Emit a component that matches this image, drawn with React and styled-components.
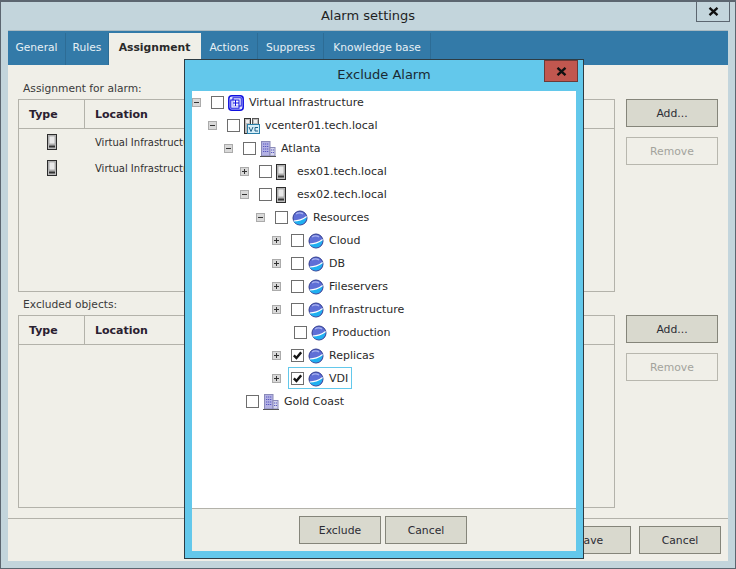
import React from 'react';
import styled, { createGlobalStyle } from 'styled-components';

const Global = createGlobalStyle`
  html, body { margin: 0; padding: 0; background: #c3d5dc; }
  * { box-sizing: border-box; }
`;
const FONT = `"DejaVu Sans", "Noto Sans", sans-serif`;

const Page = styled.div`
  position: relative; width: 736px; height: 569px; display: flex; flex-direction: column;
  background: #c3d5dc; border: 1px solid #5c6670; border-top-width: 2px;
  font-family: ${FONT}; font-size: 11px; color: #2a2a2a; overflow: hidden;
`;
const TitleBar = styled.div`
  height: 28px; display: flex; align-items: center; justify-content: center; position: relative;
  font-size: 13px; color: #1f1f1f; flex: none; padding-bottom: 2px;
`;
const CloseBtn = styled.div`
  position: absolute; top: ${p => p.$top}px; right: ${p => p.$right}px; width: 34px; height: 22px;
  display: flex; align-items: center; justify-content: center;
  background: ${p => p.$bg}; border: 1px solid ${p => p.$line};
`;
const Client = styled.div`
  margin: 0 7px 7px; flex: 1; display: flex; flex-direction: column; background: #f0efe8; min-height: 0;
  border-top: 1px solid #a8bac2;
`;
const Tabs = styled.div`
  height: 34px; display: flex; flex: none; padding-top: 2px; background: #337aa8;
`;
const Tab = styled.div`
  width: ${p => p.$w}px; display: flex; align-items: center; justify-content: center; padding-bottom: 3px;
  font-size: ${p => p.$on ? 10.8 : 10.7}px; color: ${p => p.$on ? '#2a2a2a' : '#e6f0f5'}; font-weight: ${p => p.$on ? 700 : 400};
  background: ${p => p.$on ? '#f0efe8' : 'transparent'};
  border-right: 1px solid ${p => p.$on ? 'transparent' : '#2d6c95'};
`;
const Body = styled.div`
  flex: 1; display: flex; flex-direction: column; padding: 0 10px; min-height: 0;
`;
const Section = styled.div`display: flex; flex-direction: column;`;
const Label = styled.div`
  height: ${p => p.$h}px; display: flex; align-items: flex-end; padding-left: 5px; padding-bottom: 4px; font-size: 10.7px; color: #3a3a3a;
`;
const Split = styled.div`display: flex; gap: 11px;`;
const List = styled.div`
  width: 597px; height: 193px; border: 1px solid #b3b2aa; flex: none;
`;
const ListHead = styled.div`
  height: 29px; display: flex; border-bottom: 1px solid #b3b2aa; font-weight: 700; font-size: 11px; color: #2a2030;
`;
const HeadCell = styled.div`
  width: ${p => p.$w}px; display: flex; align-items: center; padding-left: 10px;
  border-right: ${p => p.$w === 66 ? '1px solid #b3b2aa' : 'none'};
`;
const ListRow = styled.div`
  height: 26px; display: flex; align-items: center; font-size: 10px; color: #303030;
`;
const TypeCell = styled.div`width: 66px; display: flex; justify-content: center;`;
const LocCell = styled.div`padding-left: 10px;`;
const Side = styled.div`display: flex; flex-direction: column; gap: 10px;`;
const Button = styled.div`
  width: ${p => p.$w || 92}px; height: 28px; display: flex; align-items: center; justify-content: center;
  font-size: 10.8px; background: ${p => p.$off ? 'transparent' : '#d9d9ce'};
  color: ${p => p.$off ? '#a3a39c' : '#2c2c34'};
  border: 1px solid ${p => p.$off ? '#b8b7ae' : '#85857a'};
`;
const Footer = styled.div`
  height: 43px; flex: none; border-top: 1px solid #b3b2aa; display: flex; justify-content: flex-end;
  align-items: flex-start; gap: ${p => p.$gap}px; padding: 7px ${p => p.$pr}px 0 0; background: #f0efe8;
`;
const Dialog = styled.div`
  position: absolute; left: 183px; top: 57px; width: 400px; height: 500px; display: flex; flex-direction: column;
  background: #63c8eb; border: 1px solid #2d3c44; padding: 0 7px 7px;
`;
const DlgTitle = styled.div`
  height: 31px; flex: none; display: flex; align-items: center; justify-content: center; font-size: 13px; color: #1a2a33;
  padding-bottom: 2px;
`;
const Tree = styled.div`
  flex: 1; background: #fff; min-height: 0; display: flex; flex-direction: column;
`;
const Row = styled.div`
  height: 23px; flex: none; display: flex; align-items: center; padding-left: ${p => p.$x}px; position: relative;
  font-size: 11px; color: #2a2a2a;
`;
const Exp = styled.div`
  width: 9px; height: 9px; flex: none; margin-right: 10px; background: #d9d9d9; border: 1px solid #ababab;
  display: flex; align-items: center; justify-content: center; position: relative;
  &::before { content: ''; width: 5px; height: 1px; background: #333; position: absolute; }
  &::after { content: ''; display: ${p => p.$plus ? 'block' : 'none'}; width: 1px; height: 5px; background: #333; position: absolute; }
`;
const Check = styled.div`
  width: 13px; height: 13px; flex: none; border: 1px solid #6e6e6e; background: #fff;
  display: flex; align-items: center; justify-content: center;
`;
const IconSlot = styled.div`
  width: 16px; height: 16px; flex: none; margin-left: ${p => p.$ml ?? 4}px; margin-right: ${p => p.$mr ?? 5}px;
  display: flex; align-items: center; justify-content: center;
`;
const Focus = styled.div`
  position: absolute; left: 96px; top: 0; width: 64px; height: 22px; border: 1px solid #63c8eb;
`;
const DlgFooter = styled(Footer)`justify-content: center; background: #f0efe8;`;

const Tick = () => (
  <svg width="9" height="9" viewBox="0 0 11 11"><path d="M1 5.3 L4.2 8.6 L10 1.6" fill="none" stroke="#141414" strokeWidth="3" /></svg>
);
const HostIcon = () => (
  <svg width="10" height="16" viewBox="0 0 10 16">
    <rect x=".5" y=".5" width="9" height="15" fill="#bdbdbd" stroke="#2c2c2c" />
    <rect x="2" y="2" width="6" height="8" fill="#e8e8e8" stroke="#8a8a8a" strokeWidth=".6" />
    <rect x="2" y="11.5" width="6" height="2" fill="#333" />
  </svg>
);
const PoolIcon = () => (
  <svg width="16" height="16" viewBox="0 0 16 16">
    <circle cx="8" cy="8" r="7" fill="#5f6fd6" stroke="#2f3a8c" />
    <path d="M1.6 11 C6 11 10 10 14.6 6.5 C14.8 11 11.5 14.5 8 14.5 C5 14.5 2.8 13 1.6 11 Z" fill="#1fb0f0" />
    <path d="M1.6 11 C6 11 10 10 14.6 6.5" fill="none" stroke="#fff" strokeWidth="1.1" />
    <path d="M4 4 C6 2.6 9 2.6 11 4" fill="none" stroke="#a9b2ee" strokeWidth="1.2" />
  </svg>
);
const InfraIcon = () => (
  <svg width="16" height="16" viewBox="0 0 16 16">
    <rect x=".8" y=".8" width="14.4" height="14.4" rx="3" fill="#dfe3ff" stroke="#1010e0" strokeWidth="1.5" />
    <rect x="5" y="2.8" width="8.2" height="8.2" fill="#fff" stroke="#1010e0" />
    <rect x="2.8" y="5" width="8.2" height="8.2" fill="#fff" fillOpacity=".6" stroke="#1010e0" />
    <path d="M7.5 5 V11 M5 8 H11" stroke="#1010e0" />
  </svg>
);
const VcIcon = () => (
  <svg width="16" height="16" viewBox="0 0 16 16">
    <rect x=".5" y=".5" width="6" height="15" fill="#bbb" stroke="#333" />
    <rect x="8.5" y=".5" width="6" height="8" fill="#bbb" stroke="#555" />
    <rect x="2" y="2" width="3" height="3" fill="#eee" />
    <rect x="10" y="2" width="3" height="3" fill="#eee" />
    <rect x="3.5" y="6.5" width="12" height="9" fill="#d7eef8" stroke="#2a7fa8" />
    <path d="M5 9 L7 13.5 L9 9" fill="none" stroke="#1f5f85" />
    <path d="M14 9.5 H11 V13 H14" fill="none" stroke="#1f5f85" />
  </svg>
);
const CityIcon = () => (
  <svg width="16" height="16" viewBox="0 0 16 16">
    <rect x="1.5" y=".5" width="8.5" height="14.5" fill="#b4b2e4" stroke="#8a8ab8" />
    <rect x="10" y="6.5" width="5" height="8.5" fill="#d6d6ee" stroke="#8a8ab8" />
    <path d="M3 3 H8.5 M3 5.5 H8.5 M3 8 H8.5 M3 10.5 H8.5 M11 9 H14 M11 11.5 H14" stroke="#5a5ac0" strokeDasharray="1.3 .7" />
    <path d="M0 15.5 H16" stroke="#555" />
  </svg>
);
const XMark = () => (
  <svg width="11" height="9" viewBox="0 0 11 9"><path d="M1.5 .8 L9.5 8.2 M9.5 .8 L1.5 8.2" stroke="#111" strokeWidth="2.3" /></svg>
);

const icons = { host: HostIcon, pool: PoolIcon, infra: InfraIcon, vc: VcIcon, city: CityIcon };
const rows = [
  { x: 0, e: 'm', i: 'infra', t: 'Virtual Infrastructure' },
  { x: 16, e: 'm', i: 'vc', t: 'vcenter01.tech.local' },
  { x: 32, e: 'm', i: 'city', t: 'Atlanta' },
  { x: 48, e: 'p', i: 'host', t: 'esx01.tech.local', mr: 8, ml: 1 },
  { x: 48, e: 'm', i: 'host', t: 'esx02.tech.local', mr: 8, ml: 1 },
  { x: 64, e: 'm', i: 'pool', t: 'Resources' },
  { x: 80, e: 'p', i: 'pool', t: 'Cloud' },
  { x: 80, e: 'p', i: 'pool', t: 'DB' },
  { x: 80, e: 'p', i: 'pool', t: 'Fileservers' },
  { x: 80, e: 'p', i: 'pool', t: 'Infrastructure' },
  { x: 102, i: 'pool', t: 'Production' },
  { x: 80, e: 'p', i: 'pool', t: 'Replicas', c: true },
  { x: 80, e: 'p', i: 'pool', t: 'VDI', c: true, f: true },
  { x: 54, i: 'city', t: 'Gold Coast' },
];

const ObjectList = ({ items = 0 }) => (
  <List>
    <ListHead><HeadCell $w={66}>Type</HeadCell><HeadCell $w={400}>Location</HeadCell></ListHead>
    <div>
      {Array.from({ length: items }, (_, i) => (
        <ListRow key={i}><TypeCell><HostIcon /></TypeCell><LocCell>Virtual Infrastructure</LocCell></ListRow>
      ))}
    </div>
  </List>
);

export default function App() {
  return (
    <>
      <Global />
      <Page>
        <TitleBar>Alarm settings<CloseBtn $top={-2} $right={5} $bg="transparent" $line="#5c6670"><XMark /></CloseBtn></TitleBar>
        <Client>
          <Tabs>
            <Tab $w={58}>General</Tab><Tab $w={43}>Rules</Tab><Tab $w={92} $on>Assignment</Tab>
            <Tab $w={57}>Actions</Tab><Tab $w={66}>Suppress</Tab><Tab $w={107}>Knowledge base</Tab>
          </Tabs>
          <Body>
            <Section>
              <Label $h={34}>Assignment for alarm:</Label>
              <Split>
                <ObjectList items={2} />
                <Side><Button>Add...</Button><Button $off>Remove</Button></Side>
              </Split>
            </Section>
            <Section>
              <Label $h={23}>Excluded objects:</Label>
              <Split>
                <ObjectList />
                <Side><Button>Add...</Button><Button $off>Remove</Button></Side>
              </Split>
            </Section>
          </Body>
          <Footer $gap={8} $pr={7}><Button $w={82}>Save</Button><Button $w={82}>Cancel</Button></Footer>
        </Client>
        <Dialog>
          <DlgTitle>Exclude Alarm</DlgTitle>
          <CloseBtn $top={0} $right={5} $bg="#c1574f" $line="#6b3a38"><XMark /></CloseBtn>
          <Tree>
            {rows.map(r => {
              const Ic = icons[r.i];
              return (
                <Row key={r.t} $x={r.x}>
                  {r.e && <Exp $plus={r.e === 'p'} />}
                  <Check>{r.c && <Tick />}</Check>
                  <IconSlot $ml={r.ml} $mr={r.mr}><Ic /></IconSlot>
                  {r.t}
                  {r.f && <Focus />}
                </Row>
              );
            })}
          </Tree>
          <DlgFooter $gap={4} $pr={2}><Button $w={82}>Exclude</Button><Button $w={82}>Cancel</Button></DlgFooter>
        </Dialog>
      </Page>
    </>
  );
}
